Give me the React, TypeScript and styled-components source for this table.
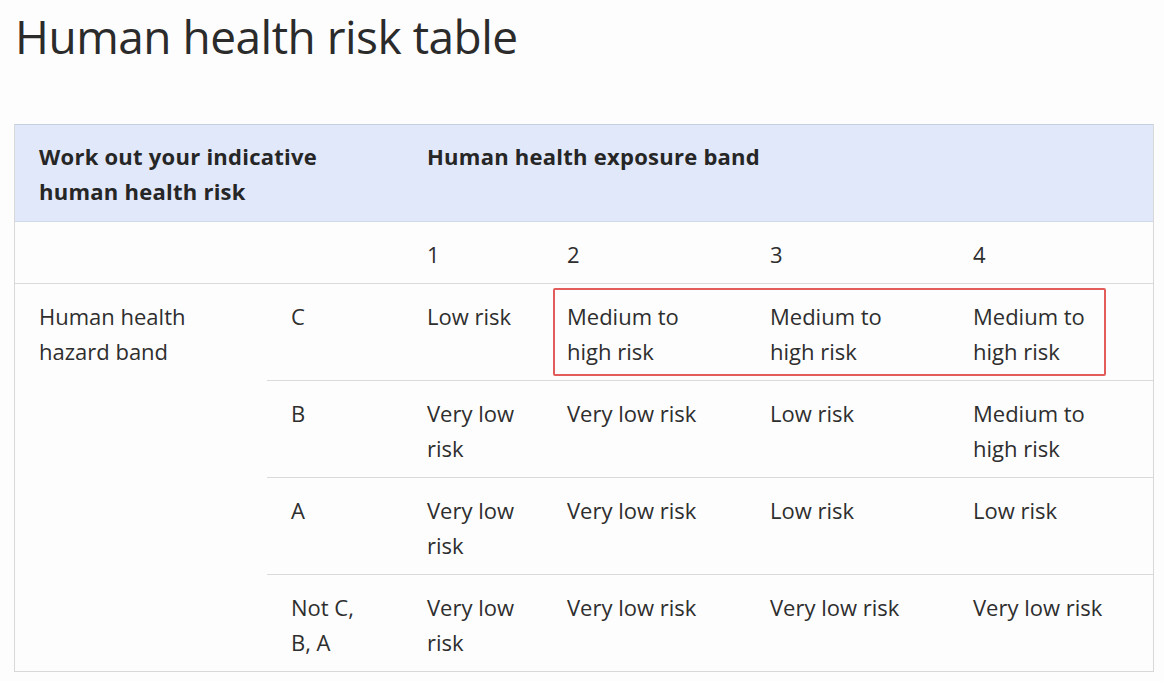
import React from "react";
import styled, { createGlobalStyle } from "styled-components";

const Global = createGlobalStyle`
  html, body { margin: 0; padding: 0; background: #fdfdfd; }
  body { font-family: "Open Sans", "Noto Sans", sans-serif; color: #2e2e2e; }
`;

const Page = styled.div`
  padding: 4px 11px 0 14px;
`;

const Title = styled.h1`
  margin: 0 0 56px 1px;
  font-size: 46px;
  font-weight: 400;
  line-height: 64px;
  letter-spacing: -0.5px;
  color: #2b2b2b;
`;

const Table = styled.div`
  display: grid;
  grid-template-columns: 252px 136px 140px 203px 203px 204px;
  width: 1138px;
  border: 1px solid #d8d8d8;
  font-size: 22px;
  line-height: 35px;
`;

const HeadCell = styled.div<{ $span?: number }>`
  grid-column: span ${(p) => p.$span ?? 1};
  background: #e0e8f9;
  border-top: 1px solid #c4cfe2;
  border-bottom: 1px solid #d0d8e8;
  margin-top: -1px;
  padding: 14px 24px 12px;
  font-weight: 700;
  font-size: 22px;
  letter-spacing: 0.25px;
  color: #262626;
`;

const Cell = styled.div<{ $row?: string; $col?: string; $noBorder?: boolean }>`
  ${(p) => (p.$row ? `grid-row: ${p.$row};` : "")}
  ${(p) => (p.$col ? `grid-column: ${p.$col};` : "")}
  padding: 15px 24px 11px;
  border-top: ${(p) => (p.$noBorder ? "none" : "1px solid #dadada")};
  color: #2e2e2e;
  white-space: nowrap;
`;

const Highlight = styled.div`
  grid-row: 3;
  grid-column: 4 / 7;
  margin: 5px 47px 4px 10px;
  border: 2.5px solid #e25c5c;
  border-radius: 2px;
  pointer-events: none;
  z-index: 1;
`;

type Row = { band: string; values: string[] };

const rows: Row[] = [
  { band: "C", values: ["Low risk", "Medium to\nhigh risk", "Medium to\nhigh risk", "Medium to\nhigh risk"] },
  { band: "B", values: ["Very low\nrisk", "Very low risk", "Low risk", "Medium to\nhigh risk"] },
  { band: "A", values: ["Very low\nrisk", "Very low risk", "Low risk", "Low risk"] },
  { band: "Not C,\nB, A", values: ["Very low\nrisk", "Very low risk", "Very low risk", "Very low risk"] },
];

const Lines = ({ text }: { text: string }) => (
  <>
    {text.split("\n").map((t, i, arr) => (
      <React.Fragment key={i}>
        {t}
        {i < arr.length - 1 && <br />}
      </React.Fragment>
    ))}
  </>
);

export default function App() {
  return (
    <Page>
      <Global />
      <Title>Human health risk table</Title>
      <Table>
        <HeadCell $span={2}>
          Work out your indicative
          <br />
          human health risk
        </HeadCell>
        <HeadCell $span={4}>Human health exposure band</HeadCell>

        <Cell $noBorder />
        <Cell $noBorder />
        {["1", "2", "3", "4"].map((n) => (
          <Cell key={n} $noBorder>
            {n}
          </Cell>
        ))}

        <Cell $row="3 / 7" $col="1">
          Human health
          <br />
          hazard band
        </Cell>
        {rows.map((r, ri) => (
          <React.Fragment key={ri}>
            <Cell $row={`${ri + 3}`} $col="2">
              <Lines text={r.band} />
            </Cell>
            {r.values.map((v, vi) => (
              <Cell key={vi} $row={`${ri + 3}`} $col={`${vi + 3}`}>
                <Lines text={v} />
              </Cell>
            ))}
          </React.Fragment>
        ))}
        <Highlight />
      </Table>
    </Page>
  );
}
